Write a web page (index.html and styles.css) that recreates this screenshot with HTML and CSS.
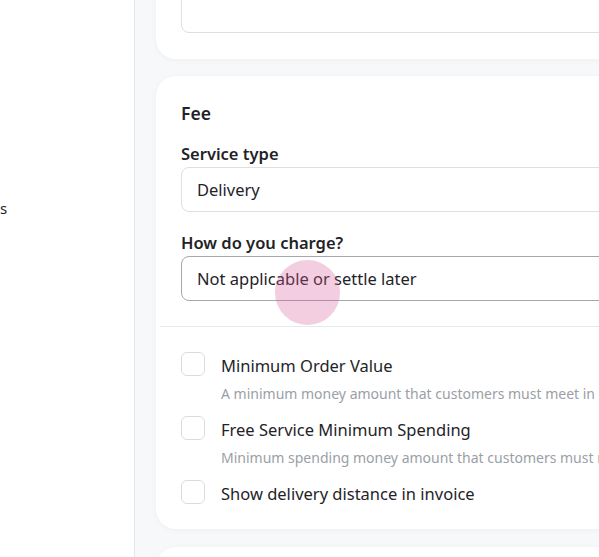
FILE: index.html
```html
<!DOCTYPE html>
<html>
<head>
<meta charset="utf-8">
<link rel="stylesheet" href="styles.css">
</head>
<body>
<div class="app">
  <aside class="sidebar">
    <div class="nav-item">s</div>
  </aside>
  <main class="main">
    <section class="card card-top">
      <div class="textarea"></div>
    </section>
    <section class="card card-fee">
      <h2 class="card-title">Fee</h2>
      <div class="field">
        <label class="field-label">Service type</label>
        <div class="select">Delivery</div>
      </div>
      <div class="field">
        <label class="field-label">How do you charge?</label>
        <div class="select select-hover">Not applicable or settle later</div>
      </div>
      <hr class="divider">
      <div class="options">
        <div class="option">
          <span class="checkbox"></span>
          <div class="option-text">
            <div class="option-label">Minimum Order Value</div>
            <div class="option-desc">A minimum money amount that customers must meet in order to place an order</div>
          </div>
        </div>
        <div class="option">
          <span class="checkbox"></span>
          <div class="option-text">
            <div class="option-label">Free Service Minimum Spending</div>
            <div class="option-desc">Minimum spending money amount that customers must meet to get free service</div>
          </div>
        </div>
        <div class="option">
          <span class="checkbox"></span>
          <div class="option-text">
            <div class="option-label">Show delivery distance in invoice</div>
          </div>
        </div>
      </div>
    </section>
    <section class="card card-next"></section>
  </main>
</div>
<div class="touch"></div>
</body>
</html>
```
FILE: styles.css
```css
* { box-sizing: border-box; }
html, body {
  margin: 0;
  padding: 0;
  width: 599px;
  height: 557px;
  overflow: hidden;
}
body {
  font-family: "Noto Sans", "Open Sans", sans-serif;
  color: #1f2328;
  background: #f7f8fa;
  position: relative;
}
.app {
  display: flex;
  height: 557px;
}
.sidebar {
  width: 135px;
  flex: none;
  background: #ffffff;
  border-right: 1px solid #e3e8ef;
  padding-top: 198px;
}
.nav-item {
  font-size: 15px;
  line-height: 20px;
  color: #1f2328;
}
.main {
  flex: none;
  width: 800px;
  padding-left: 21px;
  display: flex;
  flex-direction: column;
  gap: 17px;
}
.card {
  background: #ffffff;
  border-radius: 20px;
  box-shadow: 0 1px 6px rgba(20, 30, 50, 0.04);
  padding: 24px 24px 25px 25px;
  width: 700px;
}
.card-top {
  margin-top: -60px;
  padding-bottom: 26px;
}
.textarea {
  height: 69px;
  border: 1px solid #dcdfe4;
  border-radius: 8px;
}
.card-fee {
  padding-top: 25px;
  padding-bottom: 23px;
}
.card-title {
  margin: 0;
  font-size: 17.5px;
  font-weight: 600;
  line-height: 24px;
}
.field {
  margin-top: 17px;
  display: flex;
  flex-direction: column;
}
.field + .field {
  margin-top: 19px;
}
.field-label {
  font-size: 16.5px;
  font-weight: 600;
  line-height: 24px;
  margin-bottom: 1px;
}
.select {
  height: 45px;
  border: 1px solid #dcdfe4;
  border-radius: 8px;
  padding: 0 15px;
  display: flex;
  align-items: center;
  font-size: 16.5px;
  color: #1f2328;
}
.select-hover {
  border-color: #a3a8b0;
}
.divider {
  border: none;
  border-top: 1px solid #e6e8eb;
  margin: 25px 0 0 -21px;
}
.options {
  margin-top: 25px;
  display: flex;
  flex-direction: column;
  gap: 12px;
}
.option {
  display: flex;
  gap: 16px;
  align-items: flex-start;
}
.checkbox {
  width: 24px;
  height: 24px;
  flex: none;
  border: 1px solid #d9dde3;
  border-radius: 6px;
  background: #fff;
}
.option-text {
  padding-top: 2px;
}
.option-label {
  font-size: 16.5px;
  line-height: 24px;
  color: #1f2328;
}
.option-desc {
  margin-top: 6px;
  font-size: 14px;
  line-height: 20px;
  color: #9aa0a6;
  white-space: nowrap;
}
.card-next {
  margin-top: 1px;
  height: 200px;
}
.touch {
  position: absolute;
  left: 275px;
  top: 260px;
  width: 65px;
  height: 65px;
  border-radius: 50%;
  background: rgba(215, 88, 152, 0.3);
}
```
